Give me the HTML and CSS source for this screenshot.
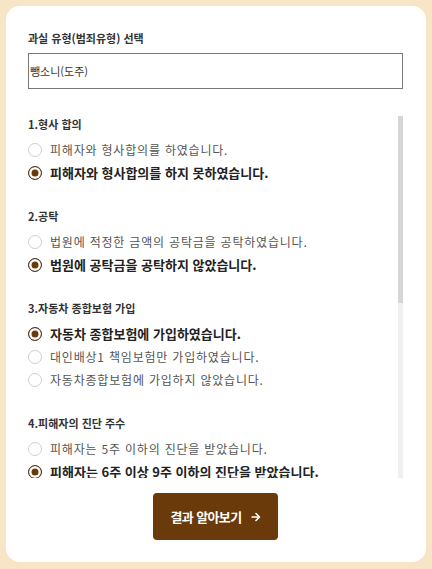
FILE: index.html
```html
<!DOCTYPE HTML>
<html lang="ko">
	<head>
		<meta charset="UTF-8">
		<title>과실 유형 선택</title>
		<link rel="stylesheet" href="styles.css">
	</head>
	<body>
		<div class="card">
			<p class="title">과실 유형(범죄유형) 선택</p>
			<div class="select">뺑소니(도주)</div>

			<div class="scroll-wrap">
				<div class="questions">
					<div class="question">
						<p class="q-title">1.형사 합의</p>
						<label class="option"><input type="radio" name="q1"><span>피해자와 형사합의를 하였습니다.</span></label>
						<label class="option"><input type="radio" name="q1" checked><span>피해자와 형사합의를 하지 못하였습니다.</span></label>
					</div>
					<div class="question">
						<p class="q-title">2.공탁</p>
						<label class="option"><input type="radio" name="q2"><span>법원에 적정한 금액의 공탁금을 공탁하였습니다.</span></label>
						<label class="option"><input type="radio" name="q2" checked><span>법원에 공탁금을 공탁하지 않았습니다.</span></label>
					</div>
					<div class="question">
						<p class="q-title">3.자동차 종합보험 가입</p>
						<label class="option"><input type="radio" name="q3" checked><span>자동차 종합보험에 가입하였습니다.</span></label>
						<label class="option"><input type="radio" name="q3"><span>대인배상1 책임보험만 가입하였습니다.</span></label>
						<label class="option"><input type="radio" name="q3"><span>자동차종합보험에 가입하지 않았습니다.</span></label>
					</div>
					<div class="question">
						<p class="q-title">4.피해자의 진단 주수</p>
						<label class="option"><input type="radio" name="q4"><span>피해자는 5주 이하의 진단을 받았습니다.</span></label>
						<label class="option"><input type="radio" name="q4" checked><span>피해자는 6주 이상 9주 이하의 진단을 받았습니다.</span></label>
						<label class="option"><input type="radio" name="q4"><span>피해자는 10주 이상의 진단을 받았습니다.</span></label>
					</div>
					<div class="question">
						<p class="q-title">5.도주 후 조치</p>
						<label class="option"><input type="radio" name="q5"><span>도주 후 스스로 자수하였습니다.</span></label>
						<label class="option"><input type="radio" name="q5" checked><span>도주 후 검거되었습니다.</span></label>
						<label class="option"><input type="radio" name="q5"><span>피해자를 구호한 뒤 현장을 떠났습니다.</span></label>
					</div>
					<div class="question">
						<p class="q-title">6.음주 여부</p>
						<label class="option"><input type="radio" name="q6" checked><span>음주 상태가 아니었습니다.</span></label>
						<label class="option"><input type="radio" name="q6"><span>음주 상태였습니다.</span></label>
					</div>
					<div class="question">
						<p class="q-title">7.동종 전과</p>
						<label class="option"><input type="radio" name="q7" checked><span>동종 전과가 없습니다.</span></label>
						<label class="option"><input type="radio" name="q7"><span>동종 전과가 있습니다.</span></label>
					</div>
				</div>
				<div class="scrollbar"><div class="thumb"></div></div>
			</div>

			<div class="actions">
				<button class="btn" type="button">결과 알아보기
					<svg class="arrow" width="10" height="10" viewBox="0 0 10 10"><path d="M1 5h7.5M5 1.5L8.5 5 5 8.5" fill="none" stroke="#fff" stroke-width="1.6" stroke-linecap="round" stroke-linejoin="round"/></svg>
				</button>
			</div>
		</div>
	</body>
</html>
```
FILE: styles.css
```css
body {
	margin: 0;
	padding: 6px;
	background: #f8e5c6;
	font-family: "Noto Sans CJK KR", "Noto Sans", sans-serif;
	color: #222;
}
.card {
	width: 420px;
	height: 556px;
	box-sizing: border-box;
	background: #fff;
	border-radius: 14px;
	padding: 24px 23px 22px 22px;
}
.title {
	margin: 0 0 7px 0;
	font-size: 11px;
	line-height: 16px;
	font-weight: 600;
	color: #333;
}
.select {
	height: 36px;
	box-sizing: border-box;
	border: 1px solid #767676;
	padding-left: 1px;
	font-size: 11px;
	line-height: 34px;
	color: #333;
}
.scroll-wrap {
	margin-top: 27px;
	height: 362px;
	display: flex;
}
.questions {
	flex: 1;
	overflow: hidden;
}
.scrollbar {
	width: 5px;
	background: #f0f0f0;
}
.thumb {
	height: 187px;
	background: #d6d6d6;
}
.question {
	margin-bottom: 24px;
}
.q-title {
	margin: 0 0 6px 0;
	font-size: 11px;
	line-height: 16px;
	font-weight: 600;
	color: #333;
}
.option {
	display: flex;
	align-items: center;
	gap: 8px;
	height: 23px;
	font-size: 12px;
	letter-spacing: 0.8px;
	color: #555;
	white-space: nowrap;
}
.option input {
	appearance: none;
	-webkit-appearance: none;
	margin: 0;
	width: 14px;
	height: 14px;
	border: 1px solid #cfcfcf;
	border-radius: 50%;
	background: #fff;
	flex-shrink: 0;
}
.option input:checked {
	border-color: #4e3b2a;
	background: #6b3a0a;
	box-shadow: inset 0 0 0 2.5px #fff;
}
.option input:checked + span {
	font-size: 13px;
	font-weight: 700;
	letter-spacing: 0;
	color: #222;
}
.actions {
	margin-top: 15px;
	text-align: center;
}
.btn {
	width: 125px;
	height: 47px;
	border: none;
	border-radius: 4px;
	background: #6b3a0a;
	color: #fff;
	font-family: inherit;
	font-size: 13px;
	font-weight: 700;
	letter-spacing: -0.6px;
	display: inline-flex;
	align-items: center;
	justify-content: center;
	gap: 9px;
	padding: 0;
}
.arrow {
	display: block;
}
```
